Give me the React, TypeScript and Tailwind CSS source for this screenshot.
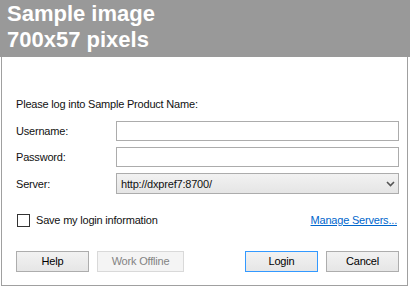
import React from "react";

const btn =
  "h-[21px] w-[73px] border text-[11px] leading-[19px] text-black bg-gradient-to-b from-[#f2f2f2] to-[#e6e6e6]";

export default function App() {
  return (
    <div className="w-[410px] h-[287px] bg-white font-['Liberation_Sans',Arial,sans-serif] text-[11px] leading-[14px] tracking-[-0.2px] text-[#111]">
      <div className="h-[57px] bg-[#999999] pl-[7px] pt-[1px] text-[22px] font-bold leading-[26px] tracking-normal text-white">
        <div>Sample image</div>
        <div>700x57 pixels</div>
      </div>
      <div className="ml-[1px] w-[407px] h-[229px] border border-t-0 border-[#a0a0a0] pl-[14px] pr-[8px] pt-[40px] flex flex-col">
        <div>Please log into Sample Product Name:</div>
        <div className="mt-[10px] flex flex-col gap-[6px]">
          <div className="flex items-center">
            <div className="w-[100px]">Username:</div>
            <input className="h-[20px] flex-1 border border-[#acacac] bg-white outline-none" />
          </div>
          <div className="flex items-center">
            <div className="w-[100px]">Password:</div>
            <input type="password" className="h-[20px] flex-1 border border-[#acacac] bg-white outline-none" />
          </div>
          <div className="flex items-center">
            <div className="w-[100px]">Server:</div>
            <div className="h-[21px] flex-1 border border-[#acacac] bg-gradient-to-b from-[#f2f2f2] to-[#e5e5e5] flex items-center pl-[4px] pr-[3px]">
              <span className="flex-1">http://dxpref7:8700/</span>
              <svg width="9" height="6" viewBox="0 0 9 6">
                <path d="M1 1 L4.5 4.5 L8 1" fill="none" stroke="#555" strokeWidth="1.6" />
              </svg>
            </div>
          </div>
        </div>
        <div className="mt-[19px] flex h-[14px] items-center">
          <div className="ml-[1px] h-[13px] w-[13px] border border-[#333] bg-white" />
          <span className="ml-[6px]">Save my login information</span>
          <span className="ml-auto mr-[2px] text-[#0066cc] underline">Manage Servers...</span>
        </div>
        <div className="mt-[24px] flex items-center">
          <button className={`${btn} border-[#adadad]`}>Help</button>
          <button className="ml-[8px] h-[21px] w-[87px] border border-[#d9d9d9] bg-[#f4f4f4] text-[11px] leading-[19px] text-[#838383]">
            Work Offline
          </button>
          <button className={`${btn} ml-auto border-[#3399ff]`}>Login</button>
          <button className={`${btn} ml-[8px] border-[#adadad]`}>Cancel</button>
        </div>
      </div>
    </div>
  );
}
